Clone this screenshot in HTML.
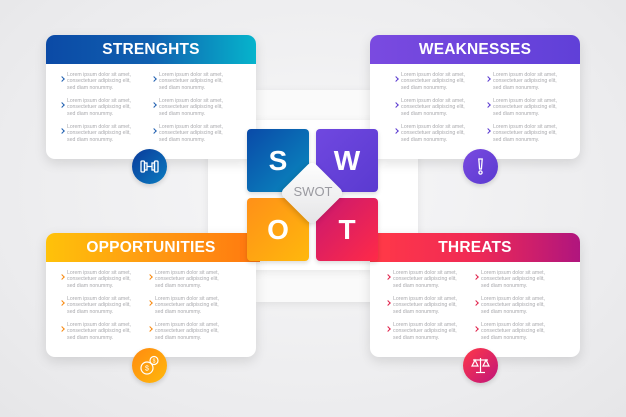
<!DOCTYPE html>
<html><head><meta charset="utf-8"><style>
*{margin:0;padding:0;box-sizing:border-box}
body{width:626px;height:417px;overflow:hidden;background:radial-gradient(ellipse at 50% 45%,#f7f7f8 0%,#ececee 70%,#e6e6e8 100%);font-family:"Liberation Sans",sans-serif;position:relative}
.abs{position:absolute}
.frame{position:absolute;background:#fafafa;box-shadow:0 2px 8px rgba(0,0,0,.08)}
.card{position:absolute;width:210px;height:124px;background:#fff;border-radius:9px;box-shadow:0 4px 12px rgba(0,0,0,.12);overflow:hidden}
.hd{height:29px;color:#fff;font-weight:bold;font-size:15.5px;text-align:center;line-height:29px;letter-spacing:.2px}
.bd{display:flex;padding-top:8px}
.col{width:92px}
.it{position:relative;padding-left:7px;font-size:5.2px;line-height:6.3px;color:#a9a9ad;height:26px;white-space:nowrap}
.it:before{content:"";position:absolute;left:0;top:5px;width:3px;height:3px;border-right:1.3px solid var(--c);border-top:1.3px solid var(--c);transform:rotate(45deg)}
.ic{position:absolute;width:35px;height:35px;border-radius:50%;box-shadow:0 2px 5px rgba(0,0,0,.15)}
.sq{position:absolute;width:62px;height:63px;border-radius:4px;color:#fff;font-weight:bold;font-size:28px;text-align:center;line-height:63px;box-shadow:0 2px 5px rgba(0,0,0,.15)}
</style></head><body>
<div class="frame" style="left:256px;top:90px;width:133px;height:212px"></div>
<div class="frame" style="left:208px;top:120px;width:210px;height:150px;background:#fff"></div>

<div class="card" style="left:46px;top:35px;--c:#1f5fb0">
<div class="hd" style="background:linear-gradient(90deg,#0b4aa6,#1060b0 50%,#06b4cc)">STRENGHTS</div>
<div class="bd" style="padding-left:14px"><div class="col"><div class="it">Lorem ipsum dolor sit amet,<br>consectetuer adipiscing elit,<br>sed diam nonummy.</div><div class="it">Lorem ipsum dolor sit amet,<br>consectetuer adipiscing elit,<br>sed diam nonummy.</div><div class="it">Lorem ipsum dolor sit amet,<br>consectetuer adipiscing elit,<br>sed diam nonummy.</div></div><div class="col"><div class="it">Lorem ipsum dolor sit amet,<br>consectetuer adipiscing elit,<br>sed diam nonummy.</div><div class="it">Lorem ipsum dolor sit amet,<br>consectetuer adipiscing elit,<br>sed diam nonummy.</div><div class="it">Lorem ipsum dolor sit amet,<br>consectetuer adipiscing elit,<br>sed diam nonummy.</div></div></div>
</div>

<div class="card" style="left:370px;top:35px;--c:#5a3ad0">
<div class="hd" style="background:linear-gradient(90deg,#7a4ae0,#6040d8)">WEAKNESSES</div>
<div class="bd" style="padding-left:24px"><div class="col"><div class="it">Lorem ipsum dolor sit amet,<br>consectetuer adipiscing elit,<br>sed diam nonummy.</div><div class="it">Lorem ipsum dolor sit amet,<br>consectetuer adipiscing elit,<br>sed diam nonummy.</div><div class="it">Lorem ipsum dolor sit amet,<br>consectetuer adipiscing elit,<br>sed diam nonummy.</div></div><div class="col"><div class="it">Lorem ipsum dolor sit amet,<br>consectetuer adipiscing elit,<br>sed diam nonummy.</div><div class="it">Lorem ipsum dolor sit amet,<br>consectetuer adipiscing elit,<br>sed diam nonummy.</div><div class="it">Lorem ipsum dolor sit amet,<br>consectetuer adipiscing elit,<br>sed diam nonummy.</div></div></div>
</div>

<div class="card" style="left:46px;top:233px;--c:#f88a10">
<div class="hd" style="background:linear-gradient(90deg,#ffc20a,#ff9a12 50%,#ff7a10)">OPPORTUNITIES</div>
<div class="bd" style="padding-left:14px"><div class="col" style="width:88px"><div class="it">Lorem ipsum dolor sit amet,<br>consectetuer adipiscing elit,<br>sed diam nonummy.</div><div class="it">Lorem ipsum dolor sit amet,<br>consectetuer adipiscing elit,<br>sed diam nonummy.</div><div class="it">Lorem ipsum dolor sit amet,<br>consectetuer adipiscing elit,<br>sed diam nonummy.</div></div><div class="col"><div class="it">Lorem ipsum dolor sit amet,<br>consectetuer adipiscing elit,<br>sed diam nonummy.</div><div class="it">Lorem ipsum dolor sit amet,<br>consectetuer adipiscing elit,<br>sed diam nonummy.</div><div class="it">Lorem ipsum dolor sit amet,<br>consectetuer adipiscing elit,<br>sed diam nonummy.</div></div></div>
</div>

<div class="card" style="left:370px;top:233px;--c:#e0204a">
<div class="hd" style="background:linear-gradient(90deg,#ff3848,#f02a55 50%,#b0157e)">THREATS</div>
<div class="bd" style="padding-left:16px"><div class="col" style="width:88px"><div class="it">Lorem ipsum dolor sit amet,<br>consectetuer adipiscing elit,<br>sed diam nonummy.</div><div class="it">Lorem ipsum dolor sit amet,<br>consectetuer adipiscing elit,<br>sed diam nonummy.</div><div class="it">Lorem ipsum dolor sit amet,<br>consectetuer adipiscing elit,<br>sed diam nonummy.</div></div><div class="col"><div class="it">Lorem ipsum dolor sit amet,<br>consectetuer adipiscing elit,<br>sed diam nonummy.</div><div class="it">Lorem ipsum dolor sit amet,<br>consectetuer adipiscing elit,<br>sed diam nonummy.</div><div class="it">Lorem ipsum dolor sit amet,<br>consectetuer adipiscing elit,<br>sed diam nonummy.</div></div></div>
</div>

<!-- header extensions toward center -->
<div class="abs" style="left:240px;top:233px;width:20px;height:29px;background:#ff7a10"></div>
<div class="abs" style="left:370px;top:233px;width:20px;height:29px;background:#ff3848"></div>

<!-- SWOT squares -->
<div class="sq" style="left:247px;top:129px;background:linear-gradient(135deg,#0a4aa8,#0a8cc0)">S</div>
<div class="sq" style="left:316px;top:129px;background:linear-gradient(135deg,#7048e0,#5a3ad0)">W</div>
<div class="sq" style="left:247px;top:198px;background:linear-gradient(135deg,#ff9018,#ffb80c)">O</div>
<div class="sq" style="left:316px;top:198px;background:linear-gradient(135deg,#c81870,#ff2a48)">T</div>
<div class="abs" style="left:289px;top:170px;width:46px;height:46px;background:linear-gradient(135deg,#ffffff,#e4e4e6);border-radius:6px;transform:rotate(45deg);box-shadow:0 2px 6px rgba(0,0,0,.18)"></div>
<div class="abs" style="left:282px;top:184px;width:62px;text-align:center;font-size:13px;color:#9a9aa0;line-height:16px">SWOT</div>

<!-- icons -->
<div class="ic" style="left:132px;top:149px;background:linear-gradient(135deg,#0a3a9a,#0a7cc0)">
<svg width="35" height="35" viewBox="0 0 35 35" fill="none" stroke="#fff" stroke-width="1.3"><rect x="9" y="12" width="3.5" height="11" rx="1"/><rect x="22.5" y="12" width="3.5" height="11" rx="1"/><rect x="12.5" y="14" width="2.5" height="7"/><rect x="20" y="14" width="2.5" height="7"/><line x1="15" y1="17.5" x2="20" y2="17.5"/></svg></div>
<div class="ic" style="left:463px;top:149px;background:linear-gradient(135deg,#7a4ae0,#5a3ad0)">
<svg width="35" height="35" viewBox="0 0 35 35" fill="none" stroke="#fff" stroke-width="1.3"><path d="M15.8 10 h3.4 l-0.8 10 h-1.8 z"/><circle cx="17.5" cy="23.5" r="1.6"/></svg></div>
<div class="ic" style="left:132px;top:348px;background:linear-gradient(135deg,#ff8a10,#ffb80c)">
<svg width="35" height="35" viewBox="0 0 35 35" fill="none" stroke="#fff" stroke-width="1.2"><circle cx="15" cy="20" r="6"/><circle cx="22" cy="12.5" r="4"/><text x="15" y="22.5" font-size="7" fill="#fff" stroke="none" text-anchor="middle" font-family="Liberation Sans">$</text><text x="22" y="14.5" font-size="5" fill="#fff" stroke="none" text-anchor="middle" font-family="Liberation Sans">$</text></svg></div>
<div class="ic" style="left:463px;top:348px;background:linear-gradient(135deg,#ff3848,#c0157a)">
<svg width="35" height="35" viewBox="0 0 35 35" fill="none" stroke="#fff" stroke-width="1.2"><line x1="17.5" y1="10" x2="17.5" y2="24"/><line x1="10" y1="12" x2="25" y2="12"/><line x1="13" y1="24.5" x2="22" y2="24.5"/><path d="M12 12 l-3 6 h6 z"/><path d="M23 12 l-3 6 h6 z"/></svg></div>
</body></html>
